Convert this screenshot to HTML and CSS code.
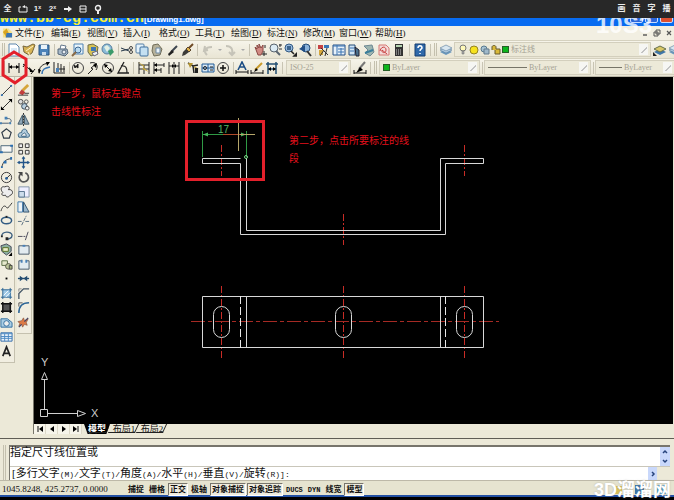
FILE: index.html
```html
<!DOCTYPE html>
<html lang="zh-CN">
<head>
<meta charset="utf-8">
<title>AutoCAD</title>
<link rel="stylesheet" href="styles.css">
</head>
<body>
<svg class="defs" aria-hidden="true">
<symbol id="new" viewBox="0 0 14 14"><path d="M2 1h7l3 3v9H2z" fill="#fff" stroke="#5c86ad"/><path d="M4 5h6v6H4z" fill="#d7e8f6"/></symbol>
<symbol id="open" viewBox="0 0 14 14"><path d="M1 3l4 1 6-3 2 1-3 8-3 2-5-3z" fill="#d7b455" stroke="#75653a"/><path d="M4 8l7-5M6 9l2 4" stroke="#fff6c9"/></symbol>
<symbol id="save" viewBox="0 0 14 14"><path d="M2 2h10v10H2z" fill="#4b82b8" stroke="#2b547f"/><path d="M4 2h6v4H4z" fill="#e9f3fa"/><path d="M5 9h4v3H5z" fill="#c9dced"/></symbol>
<symbol id="print" viewBox="0 0 14 14"><path d="M4 6l1-4 5 1-1 3" fill="#fff" stroke="#65788c"/><path d="M2 6h9l1 4-3 3-7-2z" fill="#a9bac9" stroke="#526579"/><circle cx="8" cy="9" r="2" fill="#e5eaf0" stroke="#526579"/></symbol>
<symbol id="preview" viewBox="0 0 14 14"><path d="M3 1h9v10H3z" fill="#e8f4fb" stroke="#4e83b5"/><circle cx="7" cy="7" r="3" fill="#b9daf0" stroke="#3b6792"/><path d="M5 9l-4 4" stroke="#8a6a45" stroke-width="2"/></symbol>
<symbol id="publish" viewBox="0 0 14 14"><path d="M2 2l5-1 5 3-1 6-6 3-3-4z" fill="#d6c256" stroke="#6b6b48"/><path d="M5 4h5v4H5z" fill="#3f77b5"/><path d="M6 10l5-2 1 3-4 2z" fill="#eef1f5" stroke="#667"/></symbol>
<symbol id="globe" viewBox="0 0 14 14"><circle cx="6" cy="6" r="5" fill="#8cbcd8" stroke="#587f9e"/><path d="M3 4l3-2 3 3-3 4z" fill="#e3f0e4"/><path d="M7 8l4-2 2 3-4 4z" fill="#3b9a6a"/></symbol>
<symbol id="cut" viewBox="0 0 14 14"><path d="M1 5l8 3M1 8l8-2" stroke="#26384a" fill="none"/><circle cx="11" cy="5" r="1.5" fill="none" stroke="#444"/><circle cx="11" cy="9" r="1.5" fill="none" stroke="#444"/></symbol>
<symbol id="copy" viewBox="0 0 14 14"><rect x="1" y="1" width="8" height="9" rx="1" fill="#e4f2fa" stroke="#557fa5"/><rect x="5" y="4" width="8" height="9" rx="1" fill="#c4e0f2" stroke="#3f6f9b"/></symbol>
<symbol id="paste" viewBox="0 0 14 14"><path d="M3 2l5-1 4 5-2 6-6 1-2-5z" fill="#b6b19a" stroke="#716d58"/><path d="M6 5h4v5H6z" fill="#eaf4fa" stroke="#7089a0"/></symbol>
<symbol id="pen" viewBox="0 0 14 14"><path d="M12 3L6 9" stroke="#3e4650" stroke-width="2"/><path d="M7 7l2 2-5 4-1-2z" fill="#222"/></symbol>
<symbol id="brush" viewBox="0 0 14 14"><path d="M13 1L8 6" stroke="#6e4a25" stroke-width="2"/><path d="M8 4l3 3-2 2-3-3z" fill="#e0b34d" stroke="#5b4528"/><path d="M6 6l3 3-4 3-3 1 1-4z" fill="#3b3b38"/></symbol>
<symbol id="undo" viewBox="0 0 14 14"><path d="M6 12c-4-4-2-8 5-8M4 3L3 8l4-1" fill="none" stroke="#c5c3b8" stroke-width="2"/></symbol>
<symbol id="redo" viewBox="0 0 14 14"><path d="M2 3c6 0 7 4 6 8M5 9l3 3 3-3" fill="none" stroke="#c5c3b8" stroke-width="2"/></symbol>
<symbol id="down" viewBox="0 0 8 14"><path d="M2 6h4L4 8z" fill="#aaa"/></symbol>
<symbol id="pan" viewBox="0 0 14 14"><path d="M2 4l2 2V2l2 3V1l2 4 2-3v6l-2 4H5z" fill="#d18a83" stroke="#8a4742"/><path d="M11 8v5M9 11h5M12 2v3" stroke="#222"/></symbol>
<symbol id="zoom" viewBox="0 0 14 14"><circle cx="6" cy="5" r="4" fill="#dcebf4" stroke="#59636d"/><path d="M8 8l4 4" stroke="#5b6570" stroke-width="2"/><path d="M11 2h3M12 1v3M11 6h3" stroke="#333"/></symbol>
<symbol id="zoomw" viewBox="0 0 14 14"><circle cx="6" cy="5" r="4" fill="#9abce0" stroke="#335a83"/><path d="M4 3h4v4H4z" fill="#3e658c"/><path d="M8 8l3 3M11 13h3v-3z" stroke="#222" stroke-width="1.5"/></symbol>
<symbol id="zoomp" viewBox="0 0 14 14"><circle cx="8" cy="5" r="4" fill="#8bb3da" stroke="#244c79"/><path d="M1 6l6-4v7z" fill="#234f86"/><path d="M9 8l4 5" stroke="#333" stroke-width="2"/></symbol>
<symbol id="props" viewBox="0 0 14 14"><path d="M1 2h5v4H1z" fill="#c64343"/><path d="M7 2h5v3H7z" fill="#3976b8"/><path d="M2 7h4v5H2z" fill="#d7a739"/><path d="M4 5l7 7M10 5l-2 8M3 13l4-6" stroke="#333"/></symbol>
<symbol id="dc" viewBox="0 0 14 14"><path d="M1 2h12v10H1z" fill="#e7f1fa" stroke="#234f86"/><path d="M1 3h12M5 2v10M9 5v7M6 6h6M6 9h6" stroke="#3b74b2"/></symbol>
<symbol id="pal" viewBox="0 0 14 14"><path d="M2 2h6v10H2z" fill="#d1e4f4" stroke="#244c79"/><path d="M3 5h4M3 8h4" stroke="#3b74b2"/><path d="M8 4l4 3v6H9z" fill="#4b718e" stroke="#223"/></symbol>
<symbol id="sheet" viewBox="0 0 14 14"><path d="M2 3l8-1 2 7-4 4-5-3 3-3z" fill="#9db5b0" stroke="#6e8994"/><path d="M3 10l8-3" stroke="#397e9c" stroke-width="2"/></symbol>
<symbol id="markup" viewBox="0 0 14 14"><path d="M2 2h7l3 3v7H2z" fill="#f3dcda" stroke="#d77975"/><path d="M3 8c1-5 6-5 6-1s-5 3-4 0l5 4" fill="none" stroke="#c8413f"/></symbol>
<symbol id="calc" viewBox="0 0 14 14"><path d="M3 1h8v12H3z" fill="#333"/><path d="M4 3h6" stroke="#b6d5b1" stroke-width="2"/><path d="M4 7h6M4 9h6M4 11h6" stroke="#ccc" stroke-dasharray="1 1"/></symbol>
<symbol id="help" viewBox="0 0 14 14"><path d="M2 1h10v12H2z" fill="#2f69aa" stroke="#173f70"/><path d="M5 5c0-3 4-3 4 0 0 1-2 1-2 3M7 10v1" fill="none" stroke="#fff" stroke-width="1.5"/></symbol>
<symbol id="layers" viewBox="0 0 14 14"><path d="M1 9l6-3 6 3-6 3z" fill="#6a98bd"/><path d="M1 7l6-3 6 3-6 3z" fill="#b5d1e5" stroke="#55799a" stroke-width=".6"/><path d="M1 5l6-3 6 3-6 3z" fill="#d9e7f0" stroke="#55799a" stroke-width=".6"/></symbol>
<symbol id="layerp" viewBox="0 0 14 14"><path d="M1 9l6-3 6 3-6 3z" fill="#3f76a8"/><path d="M1 6l6-3 6 3-6 3z" fill="#d9c765" stroke="#66704d"/><path d="M0 13V9l4 4z" fill="#222"/></symbol>
<symbol id="bulb" viewBox="0 0 10 12"><circle cx="5" cy="4" r="3" fill="#fff9b8" stroke="#777"/><path d="M4 7h2v3H4z" fill="#aaa" stroke="#666" stroke-width=".5"/></symbol>
<symbol id="sun" viewBox="0 0 10 12"><circle cx="5" cy="6" r="4" fill="#f6e21e" stroke="#948324"/></symbol>
<symbol id="vp" viewBox="0 0 10 12"><circle cx="4" cy="5" r="3" fill="#a7c3d2" stroke="#58798f"/><path d="M4 5h5v5H4z" fill="#9fb9ca" stroke="#637b8c"/></symbol>
<symbol id="lock" viewBox="0 0 10 12"><path d="M1 6V3c0-2 4-2 4 0v2h4v5H4V6" fill="#d9b93a" stroke="#665a2c"/></symbol>
<symbol id="dlin" viewBox="0 0 14 14"><path d="M2 2v10M12 2v10M2 6h10" stroke="#111" fill="none"/><path d="M2 6l3-2v4zM12 6l-3-2v4z"/></symbol>
<symbol id="dali" viewBox="0 0 14 14"><path d="M1 3l10 8M1 6l3-4M9 13l4-5" stroke="#111" fill="none"/><path d="M7 6l1 5 4 0z"/></symbol>
<symbol id="darc" viewBox="0 0 14 14"><path d="M2 12c0-6 3-9 10-10" stroke="#222" fill="none"/><path d="M5 13c0-5 3-6 8-7" stroke="#3a76b5" fill="none" stroke-width="1.5"/><path d="M1 8l3 1-2 4zM9 1l4 0-3 4z"/></symbol>
<symbol id="dord" viewBox="0 0 14 14"><path d="M2 1v11h11M6 2v6h7M9 3v8M12 5v6" stroke="#222" fill="none"/><path d="M4 7h3v4H4z" fill="#4a80b6"/></symbol>
<symbol id="drad" viewBox="0 0 14 14"><circle cx="7" cy="7" r="5.5" fill="none" stroke="#444"/><path d="M7 7L3 4l1 3 3-4z" stroke="#222"/></symbol>
<symbol id="djog" viewBox="0 0 14 14"><path d="M4 2c6-2 9 3 6 7M2 13l5-5-2-1 5-4" fill="none" stroke="#222"/><path d="M11 2l-1 5-3-3z"/></symbol>
<symbol id="ddia" viewBox="0 0 14 14"><circle cx="7" cy="7" r="5.5" fill="none" stroke="#444"/><path d="M3 3l8 8" stroke="#222"/><path d="M3 3l4 1-3 3zM11 11l-4-1 3-3z"/></symbol>
<symbol id="dang" viewBox="0 0 14 14"><path d="M8 1L2 12h11M5 5c5-1 6 2 6 7" fill="none" stroke="#222" stroke-width="1.3"/></symbol>
<symbol id="dqui" viewBox="0 0 14 14"><path d="M2 1v12M7 4v9M12 1v12M2 4h10M2 8h10" stroke="#222" fill="none"/><path d="M1 1l7 4-2 1 6 5-7-3 2-2z" fill="#c6a83e"/></symbol>
<symbol id="dbas" viewBox="0 0 14 14"><path d="M2 1v12M2 4h10M2 9h7M12 2v4M9 7v5" stroke="#222" fill="none"/><path d="M2 4l3-2v4zM2 9l3-2v4z"/></symbol>
<symbol id="dcon" viewBox="0 0 14 14"><path d="M2 1v12M7 1v12M12 1v12M2 5h10" stroke="#222" fill="none"/><path d="M7 5L5 3v4zM7 5l2-2v4z"/></symbol>
<symbol id="dlea" viewBox="0 0 14 14"><path d="M2 2l5 3 5-1M7 5l1 7" stroke="#222" stroke-width="1.5" fill="none"/><path d="M2 2l5 0-3 5zM8 5l5 3-4 1z" fill="#b3932f"/><path d="M9 7h3v5H9z" fill="#222"/></symbol>
<symbol id="dtol" viewBox="0 0 14 14"><path d="M1 3h12v8H1z" fill="#d9e9f5" stroke="#225c98"/><path d="M7 3v8M1 7h12" stroke="#225c98"/><circle cx="4" cy="7" r="1.5" fill="none" stroke="#222"/><path d="M9 6h3M9 9h3" stroke="#222"/></symbol>
<symbol id="dcen" viewBox="0 0 14 14"><circle cx="7" cy="7" r="5.5" fill="none" stroke="#444"/><path d="M7 4v6M4 7h6" stroke="#111" stroke-width="1.5"/></symbol>
<symbol id="dedit" viewBox="0 0 14 14"><path d="M3 9l4-8 4 8M5 6h4" fill="none" stroke="#1c4d85" stroke-width="1.6"/><path d="M1 9v4M13 9v4M1 11h12" stroke="#111"/></symbol>
<symbol id="dtedit" viewBox="0 0 14 14"><path d="M12 2L5 9" stroke="#c99b2e" stroke-width="2"/><path d="M6 7l2 2-4 2z"/><path d="M1 9v4M13 9v4M1 12h12" stroke="#111"/></symbol>
<symbol id="dupd" viewBox="0 0 14 14"><path d="M1 3h12M3 1v12M11 1v12M3 8h8" stroke="#234f73" stroke-width="1.5"/><path d="M3 8l3-2v4zM11 8L8 6v4z"/></symbol>
<symbol id="dsty" viewBox="0 0 14 14"><path d="M12 1L6 8" stroke="#777" stroke-width="2"/><path d="M7 6l3 3-7 3z"/><path d="M1 9v4M13 9v4M1 12h12" stroke="#111"/></symbol>
<symbol id="line" viewBox="0 0 14 14"><path d="M2 12L12 2" stroke="#333"/><path d="M1 11h2v2H1zM11 1h2v2h-2z" fill="#2c6fb0"/></symbol>
<symbol id="xline" viewBox="0 0 14 14"><path d="M1 13L13 1" stroke="#222"/><path d="M1 13V9l4 4zM13 1v4L9 1z"/></symbol>
<symbol id="pline" viewBox="0 0 14 14"><path d="M1 11h8c4 0 4-5 0-5H6" stroke="#43596d" fill="none"/><path d="M0 10h2v2H0zM5 4h3v3H5zM10 10h2v2h-2z" fill="#4480b5"/></symbol>
<symbol id="poly" viewBox="0 0 14 14"><path d="M7 2l5 4-2 6H4L2 6z" fill="none" stroke="#2e3a47" stroke-width="1.3"/></symbol>
<symbol id="rect" viewBox="0 0 14 14"><path d="M1 4h12v7H1z" fill="#f8f8f5" stroke="#456277"/><path d="M0 10h3v2H0zM11 3h3v2h-3z" fill="#2c6fb0"/></symbol>
<symbol id="arc" viewBox="0 0 14 14"><path d="M2 12C3 6 7 3 12 3" fill="none" stroke="#333"/><path d="M1 11h2v2H1zM4 5h3v3H4zM11 1h2v3h-2z" fill="#2c6fb0"/></symbol>
<symbol id="circ" viewBox="0 0 14 14"><circle cx="7" cy="7" r="5.5" fill="none" stroke="#333"/><path d="M7 8l4-4" stroke="#222"/><circle cx="7" cy="8" r="1.5" fill="#245c96"/></symbol>
<symbol id="cloud" viewBox="0 0 14 14"><path d="M3 8C0 5 1 1 5 2c5-2 6 1 4 3 5-1 6 5 2 6-2 3-5 2-5 0-4 1-5-1-3-3z" fill="#eee" stroke="#333"/></symbol>
<symbol id="spl" viewBox="0 0 14 14"><path d="M1 12c2-7 5-6 6-4s3-1 6-5" fill="none" stroke="#333"/></symbol>
<symbol id="ell" viewBox="0 0 14 14"><ellipse cx="7" cy="7" rx="5.5" ry="3.5" fill="none" stroke="#315b83" stroke-width="1.6"/><path d="M6 2h2v2H6z" fill="#222"/></symbol>
<symbol id="ellarc" viewBox="0 0 14 14"><path d="M2 8c-1-6 11-6 11-1 0 3-4 4-6 4" fill="none" stroke="#3d607f" stroke-width="1.5"/><path d="M6 9h3v3H6zM1 7h2v2H1z" fill="#222"/></symbol>
<symbol id="ins" viewBox="0 0 14 14"><path d="M1 3l6-2 5 3v5l-5 4-5-4z" fill="#8db1a0" stroke="#445"/><path d="M3 5h6v4H3z" fill="#edf0c9" stroke="#556b22"/><path d="M13 10v4H9z"/></symbol>
<symbol id="mkb" viewBox="0 0 14 14"><path d="M2 3h6v5H2z" fill="#e5e8cc" stroke="#556b42"/><circle cx="9" cy="9" r="3" fill="#bdc69b" stroke="#554"/><path d="M10 8h3v4h-3z" fill="#a4b17b" stroke="#444"/></symbol>
<symbol id="pt" viewBox="0 0 14 14"><path d="M6 6h2v2H6z"/></symbol>
<symbol id="hatch" viewBox="0 0 14 14"><path d="M3 3h9v8H3z" fill="#9fc9e6"/><path d="M3 1v12M11 1v12M1 3h12M1 11h12" stroke="#276191"/><path d="M4 9l5-5M6 11l5-5" stroke="#fff"/></symbol>
<symbol id="grad" viewBox="0 0 14 14"><path d="M3 3h9v8H3z" fill="#555"/><path d="M3 1v12M11 1v12M1 3h12M1 11h12" stroke="#111" stroke-width="1.5"/></symbol>
<symbol id="reg" viewBox="0 0 14 14"><path d="M1 3h7l5 4v5H1z" fill="#a9cde4" stroke="#2f6b9e"/><circle cx="7" cy="8" r="3" fill="#eee" stroke="#2f6b9e"/></symbol>
<symbol id="tab" viewBox="0 0 14 14"><path d="M1 3h12v9H1z" fill="#eaf3fb" stroke="#2d68a6"/><path d="M1 4h12M1 7h12M1 9h12M5 4v8M9 4v8" stroke="#4a88c2"/></symbol>
<symbol id="txt" viewBox="0 0 14 14"><path d="M3 12L7 2l4 10M4 9h6" fill="none" stroke="#222" stroke-width="1.8"/></symbol>
<symbol id="erase" viewBox="0 0 14 14"><path d="M12 1L6 7" stroke="#d6a63b" stroke-width="3"/><path d="M5 6l4 3-3 3-4-2z" fill="#c33e3d"/><path d="M1 12h11M8 10h5" stroke="#333"/></symbol>
<symbol id="cpo" viewBox="0 0 14 14"><circle cx="4" cy="4" r="2.5" fill="#ddd" stroke="#444"/><circle cx="10" cy="4" r="2" fill="none" stroke="#555"/><circle cx="8" cy="9" r="3" fill="#b9cfdf" stroke="#345"/><circle cx="11" cy="11" r="2" fill="#eee" stroke="#444"/></symbol>
<symbol id="mir" viewBox="0 0 14 14"><path d="M6 2v10H1zM8 2v10h5z" fill="#8fa7b8" stroke="#3f5666"/><path d="M7 0v14" stroke="#222" stroke-dasharray="2 1"/></symbol>
<symbol id="off" viewBox="0 0 14 14"><path d="M2 11c-2-4 1-5 3-5 0-5 6-5 6 0 3 1 3 5 1 5z" fill="#b4cddd" stroke="#34607f"/><path d="M5 10c-1-2 1-2 2-3 2-2 3 2 3 3z" fill="#eee" stroke="#34607f"/></symbol>
<symbol id="arr" viewBox="0 0 14 14"><path d="M2 2h4v4H2zM9 2h4v4H9zM2 9h4v4H2zM9 9h4v4H9z" fill="#eee" stroke="#333"/></symbol>
<symbol id="mov" viewBox="0 0 14 14"><path d="M7 1v12M1 7h12" stroke="#24568a" stroke-width="1.5"/><path d="M7 0l2 3H5zM7 14l2-3H5zM0 7l3-2v4zM14 7l-3-2v4z" fill="#24568a"/></symbol>
<symbol id="rot" viewBox="0 0 14 14"><path d="M4 3a5 5 0 1 0 5-1" fill="none" stroke="#555" stroke-width="1.8"/><path d="M1 1h5v5z" fill="#444"/></symbol>
<symbol id="scl" viewBox="0 0 14 14"><path d="M2 2h11v11H2z" fill="#eef" stroke="#8293a7"/><path d="M2 7h6v6H2z" fill="#cdddec" stroke="#55718c"/></symbol>
<symbol id="str" viewBox="0 0 14 14"><path d="M1 2h5v11H1z" fill="#edf3f7" stroke="#3974a8"/><path d="M7 2l6 11H7z" fill="#9ab8ce" stroke="#33536e"/></symbol>
<symbol id="trim" viewBox="0 0 14 14"><path d="M1 8h5M9 8h4M5 12l5-10" stroke="#526a7c" stroke-dasharray="4 1"/></symbol>
<symbol id="ext" viewBox="0 0 14 14"><path d="M1 8h5M7 8h2M9 12l3-9" stroke="#445"/></symbol>
<symbol id="bp" viewBox="0 0 14 14"><path d="M2 3h11v9H2z" fill="#e3ebf0" stroke="#456"/><path d="M6 2h3v2H6z" fill="#4a80b6"/></symbol>
<symbol id="br" viewBox="0 0 14 14"><path d="M5 3H2v9h11V3h-3" fill="#e3ebf0" stroke="#456"/><path d="M4 2h2v3H4zM9 2h2v3H9z" fill="#4a80b6"/></symbol>
<symbol id="join" viewBox="0 0 14 14"><path d="M1 7h12" stroke="#244c70" stroke-width="1.5"/><path d="M3 4l4 3-4 3zM11 4L7 7l4 3z" fill="#244c70"/></symbol>
<symbol id="cham" viewBox="0 0 14 14"><path d="M2 13V7l5-5h6" fill="none" stroke="#456" stroke-width="1.4"/><path d="M2 5V2h3" fill="none" stroke="#888"/></symbol>
<symbol id="fil" viewBox="0 0 14 14"><path d="M2 13c0-7 3-11 11-11" fill="none" stroke="#2c6596" stroke-width="1.6"/><path d="M2 6V2h4" fill="none" stroke="#555"/></symbol>
<symbol id="expl" viewBox="0 0 14 14"><path d="M1 6l4-1 2-3 1 3 4-2-2 4 1 3-3-1-2 3-1-3-3 2 1-3z" fill="#dd7a45" stroke="#84513a" stroke-width=".7"/><path d="M8 6l4-4M2 12l3-3" stroke="#446" stroke-width="1.3"/></symbol>
</svg>

<header class="overlay-bar">
  <div class="overlay-tools">
    <button>全</button>
    <button aria-label="窗口"><svg viewBox="0 0 10 10"><path d="M3 3H1v5h8V3H7" fill="none" stroke="#eee"/><path d="M4 3l3-2v3z" fill="#eee"/></svg></button>
    <button>1ˣ</button>
    <button>2ˣ</button>
    <button aria-label="下一步"><svg viewBox="0 0 10 10"><path d="M1 5h5" stroke="#eee" stroke-width="2"/><path d="M5 2l4 3-4 3z" fill="#eee"/></svg></button>
    <button aria-label="列表"><svg viewBox="0 0 10 10"><path d="M2 2h6v6H2zM2 5h6" fill="none" stroke="#eee"/></svg></button>
    <button aria-label="提示"><svg viewBox="0 0 10 10"><circle cx="5" cy="4" r="2.5" fill="none" stroke="#eee" stroke-width="1.4"/><path d="M4 7h2v3H4z" fill="#eee"/></svg></button>
  </div>
  <div class="overlay-tools"><button>画</button><button>音</button><button>字</button><button>播</button></div>
</header>

<div class="titlebar">
  <span class="site">www.bb-cg.com.cn</span><span class="doc">[Drawing1.dwg]</span>
  <div class="winbtns"><button aria-label="最小化"></button><button aria-label="还原"></button><button class="close" aria-label="关闭"></button></div>
</div>

<nav class="menubar">
  <svg class="appicon" viewBox="0 0 12 12"><path d="M1 1h6l4 4v6H1z" fill="#f4e08a"/><path d="M1 5l4-4 3 6-3 4z" fill="#d9a520"/><path d="M5 6h6v5H4z" fill="#3a74b4"/></svg>
  <button>文件(<u>F</u>)</button><button>编辑(<u>E</u>)</button><button>视图(<u>V</u>)</button><button>插入(<u>I</u>)</button><button>格式(<u>O</u>)</button><button>工具(<u>T</u>)</button><button>绘图(<u>D</u>)</button><button>标注(<u>N</u>)</button><button>修改(<u>M</u>)</button><button>窗口(<u>W</u>)</button><button>帮助(<u>H</u>)</button>
  <div class="docbtns"><button aria-label="最小化文档"><svg viewBox="0 0 8 8"><path d="M2 6h4" stroke="#555" stroke-width="1.4"/></svg></button><button aria-label="还原文档"><svg viewBox="0 0 8 8"><path d="M3 1h4v4H3zM1 3h4v4H1z" fill="#ece9d8" stroke="#555"/></svg></button><button aria-label="关闭文档"><svg viewBox="0 0 8 8"><path d="M2 2l4 4M6 2L2 6" stroke="#555" stroke-width="1.2"/></svg></button></div>
</nav>

<div class="toolbar">
  <i class="grip"></i>
  <button aria-label="新建"><svg><use href="#new"/></svg></button><button aria-label="打开"><svg><use href="#open"/></svg></button><button aria-label="保存"><svg><use href="#save"/></svg></button><i class="sep"></i>
  <button aria-label="打印"><svg><use href="#print"/></svg></button><button aria-label="打印预览"><svg><use href="#preview"/></svg></button><button aria-label="发布"><svg><use href="#publish"/></svg></button><button aria-label="三维DWF"><svg><use href="#globe"/></svg></button><i class="sep"></i>
  <button aria-label="剪切"><svg><use href="#cut"/></svg></button><button aria-label="复制"><svg><use href="#copy"/></svg></button><button aria-label="粘贴"><svg><use href="#paste"/></svg></button><button aria-label="特性匹配"><svg><use href="#pen"/></svg></button><button aria-label="块编辑器"><svg><use href="#brush"/></svg></button><i class="sep wide"></i>
  <button aria-label="放弃"><svg><use href="#undo"/></svg></button><button class="drop" aria-label="放弃列表"><svg><use href="#down"/></svg></button><button aria-label="重做"><svg><use href="#redo"/></svg></button><button class="drop" aria-label="重做列表"><svg><use href="#down"/></svg></button><i class="sep wide"></i>
  <button aria-label="实时平移"><svg><use href="#pan"/></svg></button><button aria-label="实时缩放"><svg><use href="#zoom"/></svg></button><button aria-label="窗口缩放"><svg><use href="#zoomw"/></svg></button><button aria-label="缩放上一个"><svg><use href="#zoomp"/></svg></button><i class="sep"></i>
  <button aria-label="特性"><svg><use href="#props"/></svg></button><button aria-label="设计中心"><svg><use href="#dc"/></svg></button><button aria-label="工具选项板"><svg><use href="#pal"/></svg></button><button aria-label="图纸集"><svg><use href="#sheet"/></svg></button><button aria-label="标记集"><svg><use href="#markup"/></svg></button><button aria-label="计算器"><svg><use href="#calc"/></svg></button><i class="sep wide"></i>
  <button aria-label="帮助"><svg><use href="#help"/></svg></button><i class="sep"></i><i class="grip"></i>
  <button aria-label="图层特性"><svg><use href="#layers"/></svg></button>
  <div class="combo layer"><svg class="st"><use href="#bulb"/></svg><svg class="st"><use href="#sun"/></svg><svg class="st"><use href="#vp"/></svg><svg class="st"><use href="#lock"/></svg><i class="swatch"></i><select aria-label="图层"><option>标注线</option></select></div>
  <button aria-label="上一个图层"><svg><use href="#layerp"/></svg></button><button aria-label="图层状态"><svg><use href="#layers"/></svg></button>
</div>

<div class="toolbar">
  <i class="grip"></i>
  <button aria-label="线性标注"><svg><use href="#dlin"/></svg></button><button aria-label="对齐标注"><svg><use href="#dali"/></svg></button><button aria-label="弧长标注"><svg><use href="#darc"/></svg></button><button aria-label="坐标标注"><svg><use href="#dord"/></svg></button><i class="sep"></i>
  <button aria-label="半径标注"><svg><use href="#drad"/></svg></button><button aria-label="折弯标注"><svg><use href="#djog"/></svg></button><button aria-label="直径标注"><svg><use href="#ddia"/></svg></button><button aria-label="角度标注"><svg><use href="#dang"/></svg></button><i class="sep wide"></i>
  <button aria-label="快速标注"><svg><use href="#dqui"/></svg></button><button aria-label="基线标注"><svg><use href="#dbas"/></svg></button><button aria-label="连续标注"><svg><use href="#dcon"/></svg></button><i class="sep"></i>
  <button aria-label="快速引线"><svg><use href="#dlea"/></svg></button><button aria-label="公差"><svg><use href="#dtol"/></svg></button><button aria-label="圆心标记"><svg><use href="#dcen"/></svg></button><i class="sep"></i>
  <button aria-label="编辑标注"><svg><use href="#dedit"/></svg></button><button aria-label="编辑标注文字"><svg><use href="#dtedit"/></svg></button><button aria-label="标注更新"><svg><use href="#dupd"/></svg></button><i class="sep"></i>
  <div class="combo dimstyle"><select aria-label="标注样式"><option>ISO-25</option></select></div>
  <button aria-label="标注样式管理"><svg><use href="#dsty"/></svg></button><i class="sep"></i><i class="grip"></i>
  <div class="combo color"><i class="swatch"></i><select aria-label="颜色"><option>ByLayer</option></select></div><i class="sep"></i>
  <div class="combo ltype"><i class="rule"></i><select aria-label="线型"><option>ByLayer</option></select></div><i class="sep"></i>
  <div class="combo lweight"><i class="rule short"></i><select aria-label="线宽"><option>ByLayer</option></select></div>
</div>

<main class="work">
  <aside class="palettes">
    <div class="palette">
      <button aria-label="直线"><svg><use href="#line"/></svg></button><button aria-label="构造线"><svg><use href="#xline"/></svg></button><button aria-label="多段线"><svg><use href="#pline"/></svg></button><button aria-label="正多边形"><svg><use href="#poly"/></svg></button><button aria-label="矩形"><svg><use href="#rect"/></svg></button><button aria-label="圆弧"><svg><use href="#arc"/></svg></button><button aria-label="圆"><svg><use href="#circ"/></svg></button><button aria-label="修订云线"><svg><use href="#cloud"/></svg></button><button aria-label="样条曲线"><svg><use href="#spl"/></svg></button><button aria-label="椭圆"><svg><use href="#ell"/></svg></button><button aria-label="椭圆弧"><svg><use href="#ellarc"/></svg></button><button aria-label="插入块"><svg><use href="#ins"/></svg></button><button aria-label="创建块"><svg><use href="#mkb"/></svg></button><button aria-label="点"><svg><use href="#pt"/></svg></button><button aria-label="图案填充"><svg><use href="#hatch"/></svg></button><button aria-label="渐变色"><svg><use href="#grad"/></svg></button><button aria-label="面域"><svg><use href="#reg"/></svg></button><button aria-label="表格"><svg><use href="#tab"/></svg></button><button aria-label="多行文字"><svg><use href="#txt"/></svg></button>
    </div>
    <div class="palette">
      <button aria-label="删除"><svg><use href="#erase"/></svg></button><button aria-label="复制对象"><svg><use href="#cpo"/></svg></button><button aria-label="镜像"><svg><use href="#mir"/></svg></button><button aria-label="偏移"><svg><use href="#off"/></svg></button><button aria-label="阵列"><svg><use href="#arr"/></svg></button><button aria-label="移动"><svg><use href="#mov"/></svg></button><button aria-label="旋转"><svg><use href="#rot"/></svg></button><button aria-label="缩放"><svg><use href="#scl"/></svg></button><button aria-label="拉伸"><svg><use href="#str"/></svg></button><button aria-label="修剪"><svg><use href="#trim"/></svg></button><button aria-label="延伸"><svg><use href="#ext"/></svg></button><button aria-label="打断于点"><svg><use href="#bp"/></svg></button><button aria-label="打断"><svg><use href="#br"/></svg></button><button aria-label="合并"><svg><use href="#join"/></svg></button><button aria-label="倒角"><svg><use href="#cham"/></svg></button><button aria-label="圆角"><svg><use href="#fil"/></svg></button><button aria-label="分解"><svg><use href="#expl"/></svg></button>
    </div>
  </aside>
  <section class="view">
    <div class="canvas">
      <svg class="drawing" role="img" aria-label="支架图形"><g transform="translate(-34 -77)" fill="none">
        <g stroke="#c92c26" stroke-dasharray="7 2 2 2">
          <path d="M221.5 145v31"/><path d="M464.5 145v31"/><path d="M343.5 214v31"/>
          <path d="M221.5 286v73"/><path d="M343.5 286v73"/><path d="M464.5 286v73"/>
        </g>
        <path d="M191 321.5h308" stroke="#a52a24" stroke-dasharray="14 3 4 3"/>
        <path d="M240.5 158.5H202.5V163.5H240.5V234.5H445.5V163.5H483.5V158.5H440.5V230.5H246.5V158" stroke="#d8d8d8"/>
        <path d="M202.5 296.5H483.5V347.5H202.5zM246.5 296V348M440.5 296V348" stroke="#d8d8d8"/>
        <path d="M240.5 296V348M445.5 296V348" stroke="#e8e8e8" stroke-dasharray="8 3"/>
        <g stroke="#d8d8d8"><rect x="213.5" y="306.5" width="16" height="31" rx="8"/><rect x="335.5" y="306.5" width="16" height="31" rx="8"/><rect x="456.5" y="306.5" width="16" height="31" rx="8"/></g>
        <path d="M202.5 157V131M246.5 131V157M202 134.5H223" stroke="#2f9a45"/>
        <path d="M203 134.5l5-2v4zM246 134.5l-5-2v4z" fill="#43b55a"/>
        <path d="M223 134.5H240" stroke="#b04a2a"/><path d="M238.5 118V151M240 134.5H255" stroke="#b5a66a"/><circle cx="246" cy="157" r="1.5" stroke="#79d887"/>
        <text class="dimtext" x="218" y="133">17</text>
        <rect x="186.5" y="121.5" width="77" height="58" stroke="#e3202b" stroke-width="3"/>
      </g></svg>
      <svg class="ucs" viewBox="0 0 64 60" role="img" aria-label="坐标系图标"><path d="M3.5 46.5h7v7h-7zM7.5 46V16M11 50.5H40M4.500 16.500h6l-3-7zM40.5 47.5v6l8-3z" fill="none" stroke="#d0d0d0"/><text x="4" y="3">Y</text><text x="54" y="54">X</text></svg>
      <p class="note first">第一步，鼠标左键点击线性标注</p>
      <p class="note second">第二步，点击所要标注的线段</p>
    </div>
    <div class="tabs">
      <button class="nav" aria-label="首个"><svg viewBox="0 0 8 8"><path d="M2 1v6" stroke="#111"/><path d="M7 1v6L3 4z"/></svg></button><button class="nav" aria-label="上一个"><svg viewBox="0 0 8 8"><path d="M6 1v6L2 4z"/></svg></button><button class="nav" aria-label="下一个"><svg viewBox="0 0 8 8"><path d="M2 1v6l4-3z"/></svg></button><button class="nav" aria-label="末个"><svg viewBox="0 0 8 8"><path d="M6 1v6" stroke="#111"/><path d="M1 1v6l4-3z"/></svg></button>
      <button class="tab active">模型</button><button class="tab">布局1</button><button class="tab">布局2</button>
    </div>
  </section>
</main>
<svg class="marker" viewBox="0 0 30 36" aria-hidden="true"><path d="M14 2L26 9V25L15 33 3 25V9z" fill="none" stroke="#e3202b" stroke-width="3"/></svg>

<section class="command">
  <i class="grip"></i>
  <div class="console">
    <div class="row history"><p>指定尺寸线位置或</p><div class="scroll"><button aria-label="向上"><svg viewBox="0 0 8 8"><path d="M2 5l2-2 2 2" fill="none" stroke="#26437c" stroke-width="1.5"/></svg></button><button aria-label="向下"><svg viewBox="0 0 8 8"><path d="M2 3l2 2 2-2" fill="none" stroke="#26437c" stroke-width="1.5"/></svg></button></div></div>
    <div class="row prompt"><label for="cmd">[多行文字<span>(M)/</span>文字<span>(T)/</span>角度<span>(A)/</span>水平<span>(H)/</span>垂直<span>(V)/</span>旋转<span>(R)]:</span></label><input id="cmd" type="text"><button aria-label="向右"><svg viewBox="0 0 8 8"><path d="M3 2l2 2-2 2" fill="none" stroke="#26437c" stroke-width="1.5"/></svg></button></div>
  </div>
</section>

<footer class="status">
  <output>1045.8248, 425.2737, 0.0000</output>
  <button>捕捉</button><button>栅格</button><button class="on">正交</button><button>极轴</button><button class="on">对象捕捉</button><button class="on">对象追踪</button><button class="latin">DUCS</button><button class="latin">DYN</button><button>线宽</button><button class="on">模型</button>
  <svg class="tray" viewBox="0 0 60 12" aria-hidden="true"><path d="M2 3h9v8H2z" fill="#d9c25a"/><path d="M24 2h9v9h-9z" fill="#3b74a8"/><path d="M46 2h9v9h-9z" fill="#4a9ac0"/></svg>
</footer>
<div class="mark-corner" aria-hidden="true">10S3</div>
<div class="mark-site">3D溜溜网</div>
</body>
</html>
```
FILE: styles.css
```css
* { box-sizing: border-box; }
body {
  margin: 0;
  min-height: 100vh;
  display: flex;
  flex-direction: column;
  position: relative;
  overflow: hidden;
  background: #ece9d8;
  color: #111;
  font-family: "Liberation Serif", "Noto Sans CJK SC", serif;
  font-size: 9px;
  line-height: 12px;
}
button {
  padding: 0;
  border: 0;
  background: none;
  color: inherit;
  font: inherit;
  white-space: nowrap;
}
p { margin: 0; }
svg { display: block; }
.defs { position: absolute; width: 0; height: 0; }

.overlay-bar {
  display: flex;
  justify-content: space-between;
  align-items: center;
  height: 18px;
  padding: 0 0 0 0;
  background: #282828;
  color: #eee;
  font: bold 8px/12px "Liberation Sans", "Noto Sans CJK SC", sans-serif;
}
.overlay-tools { display: flex; }
.overlay-tools button { display: grid; place-content: center; width: 15px; }
.overlay-tools svg { width: 10px; height: 10px; }

.titlebar {
  display: flex;
  align-items: flex-end;
  height: 8px;
  overflow: hidden;
  background: #086bf0;
}
.site { color: #f5ef35; font: bold 15px/15px "Liberation Mono", monospace; }
.doc { color: #fff; font: bold 8px/12px "Liberation Sans", sans-serif; }
.winbtns { display: flex; gap: 2px; margin-left: auto; padding-right: 1px; }
.winbtns button { width: 13px; height: 12px; margin-bottom: 3px; border: 1px solid #c8dcff; border-radius: 2px; background: #2b66d9; }
.winbtns .close { background: #dd5030; }

.menubar { display: flex; align-items: center; height: 14px; padding-left: 2px; background: #f2efe2; }
.menubar .appicon { width: 11px; height: 12px; margin-right: 2px; }
.menubar > button { width: 36px; text-align: left; }
.menubar u { text-underline-offset: 1px; }
.docbtns { display: flex; gap: 4px; margin-left: auto; padding-right: 1px; }
.docbtns svg { width: 8px; height: 8px; }

.toolbar {
  display: flex;
  align-items: center;
  height: 18px;
  overflow: hidden;
  border-top: 1px solid #d5d1bf;
  background: linear-gradient(#f6f4ea, #e9e5d4);
}
.toolbar > * { flex: none; }
.toolbar > button { width: 15px; height: 14px; }
.toolbar > button svg { width: 14px; height: 14px; }
.toolbar > .drop, .toolbar > .drop svg { width: 8px; }
.grip { width: 3px; height: 13px; margin: 0 2px; border: solid #c4c0ae; border-width: 0 1px; }
.sep { width: 4px; height: 12px; background: linear-gradient(90deg, transparent 2px, #c8c4b3 2px, #c8c4b3 3px, transparent 3px); }
.sep.wide { width: 6px; }
.combo {
  display: flex;
  align-items: center;
  height: 15px;
  padding: 0 2px 0 3px;
  border: 1px solid #d3cfbd;
  background: #ece9d8;
}
.combo::after {
  content: "";
  width: 9px;
  height: 11px;
  background: linear-gradient(135deg, transparent 45%, #c3c3c3 45%, #c3c3c3 60%, transparent 60%) 2px 3px / 6px 6px no-repeat, #f6f6f3;
}
.combo select {
  flex: 1;
  min-width: 0;
  height: 12px;
  padding: 0;
  border: 0;
  appearance: none;
  background: none;
  color: #a5a294;
  font: 8px/12px "Liberation Serif", "Noto Sans CJK SC", serif;
}
.combo .st { width: 10px; height: 12px; margin-right: 1px; }
.swatch { width: 7px; height: 7px; margin-right: 2px; border: 1px solid #265f26; background: #0db51c; }
.rule { width: 39px; height: 1px; margin-right: 2px; background: #777568; }
.rule.short { width: 23px; }
.layer { width: 197px; margin-right: 2px; }
.dimstyle { width: 65px; margin: 0 2px; }
.color { width: 101px; }
.ltype { width: 107px; }
.toolbar > .lweight { flex: 1 0 80px; }

.work { flex: 1; display: flex; min-height: 0; border-top: 1px solid #b9b6a6; }
.palettes { display: flex; align-items: flex-start; gap: 2px; width: 34px; flex: none; border-right: 1px solid #77756a; }
.palette {
  display: grid;
  grid-auto-rows: 14px 15px;
  width: 15px;
  padding: 6px 0 4px;
  border: solid #c5c1af;
  border-width: 0 1px 1px 0;
  background: #f1eee1;
}
.palette svg { width: 13px; height: 13px; }
.view { flex: 1; display: flex; flex-direction: column; min-width: 0; padding-right: 1px; }
.canvas { flex: 1; position: relative; overflow: hidden; background: #000; }
.drawing { position: absolute; inset: 0; width: 100%; height: 100%; }
.dimtext { fill: #58b868; font: 10px "Liberation Sans", sans-serif; }
.ucs { position: absolute; left: 3px; bottom: 1px; width: 64px; height: 60px; overflow: visible; }
.ucs text { fill: #ccc; font: 11px "Liberation Sans", sans-serif; }
.note { position: absolute; color: #e4101c; font: 10px/18px "Noto Sans CJK SC", sans-serif; }
.note.first { left: 17px; top: 7px; width: 92px; }
.note.second { left: 255px; top: 54px; width: 124px; }

.tabs { display: flex; height: 10px; background: #ece9d8; line-height: 10px; }
.nav { width: 12px; background: #f6f4ea; border-right: 1px solid #dcd8c8; }
.nav svg { width: 8px; height: 8px; margin: 0 auto; }
.tab { position: relative; height: 10px; width: 28px; }
.tab::after {
  content: "";
  position: absolute;
  inset: 0 1px 1px 0;
  border: solid #222;
  border-width: 0 1px 1px 0;
  transform: skewX(-25deg);
}
.tab.active { width: 26px; margin-left: 2px; background: #000; color: #fff; font-weight: bold; clip-path: polygon(0 0, 100% 0, 86% 100%, 14% 100%); }

.marker { position: absolute; left: 0; top: 50px; width: 30px; height: 36px; }

.command {
  display: flex;
  margin-top: 4px;
  padding: 6px 4px 0 0;
  border-top: 1px solid #5f5d55;
  background: #ece9d8;
}
.command .grip { height: auto; margin: 0 3px; }
.console { flex: 1; border-top: 2px solid #77756c; border-left: 1px solid #77756c; font-size: 11px; }
.row { display: flex; background: #fff; }
.history { height: 20px; justify-content: space-between; border-bottom: 1px solid #c9c6ba; line-height: 11px; }
.scroll { display: grid; width: 10px; }
.scroll button, .prompt button { background: #c9d8fb; }
.row svg { width: 8px; height: 8px; margin: 0 auto; }
.prompt { height: 13px; padding-left: 2px; line-height: 13px; border-right: 13px solid #ece9d8; }
.prompt span { font: 8px/12px "Liberation Mono", monospace; }
.prompt input { flex: 1; min-width: 0; padding: 0; border: 0; outline: 0; background: none; font: inherit; }
.prompt button { width: 9px; }

.status {
  display: flex;
  align-items: center;
  gap: 1px;
  height: 20px;
  padding: 0 3px 0 2px;
  border-top: 1px solid #bdb9a8;
  border-bottom: 3px solid #000;
  background: #e6e4d0;
  box-shadow: inset 0 -2px #2351a4;
  font: 9px/12px "Liberation Serif", "Noto Sans CJK SC", serif;
}
.status output { width: 123px; }
.status button { height: 13px; padding: 0 1px; font-size: 8px; font-weight: bold; border: 1px solid transparent; }
.status .on { border-color: #77756c #fff #fff #77756c; background: #efecdf; }
.status .latin { font: bold 7px/12px "Liberation Mono", monospace; }
.tray { width: 60px; height: 12px; margin-left: auto; }

.mark-corner {
  position: absolute;
  right: 22px;
  top: 18px;
  height: 16px;
  display: flex;
  align-items: flex-end;
  overflow: hidden;
  color: #fffc;
  font: bold 24px/18px "Liberation Sans", sans-serif;
  pointer-events: none;
}
.mark-site {
  position: absolute;
  right: 3px;
  bottom: 0;
  color: #fff;
  font: bold 18px/20px "Liberation Sans", "Noto Sans CJK SC", sans-serif;
  text-shadow: 0 0 2px #8888;
}
```
